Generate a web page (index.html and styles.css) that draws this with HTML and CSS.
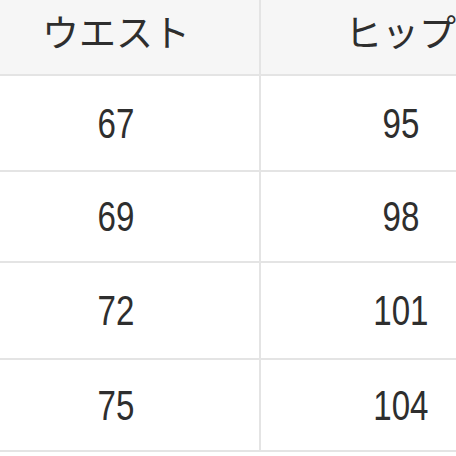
FILE: index.html
```html
<!DOCTYPE html>
<html lang="ja">
<head>
<meta charset="utf-8">
<link rel="stylesheet" href="styles.css">
</head>
<body>
<div class="table">
  <div class="cell head left">ウエスト</div>
  <div class="cell head right">ヒップ</div>
  <div class="cell left"><span class="num">67</span></div>
  <div class="cell right"><span class="num">95</span></div>
  <div class="cell left"><span class="num">69</span></div>
  <div class="cell right"><span class="num">98</span></div>
  <div class="cell left"><span class="num">72</span></div>
  <div class="cell right"><span class="num">101</span></div>
  <div class="cell left"><span class="num">75</span></div>
  <div class="cell right"><span class="num">104</span></div>
</div>
</body>
</html>
```

FILE: styles.css
```css
html, body {
  margin: 0;
  padding: 0;
  width: 456px;
  height: 456px;
  overflow: hidden;
  background: #ffffff;
}

.table {
  display: grid;
  grid-template-columns: 261px 195px;
  grid-template-rows: 76px 96px 91px 97px 92px;
  width: 456px;
  overflow: hidden;
}

.cell {
  box-sizing: border-box;
  display: flex;
  align-items: center;
  justify-content: center;
  border-bottom: 2px solid #e4e4e4;
  color: #2e2e2e;
  overflow: hidden;
  white-space: nowrap;
}

.left {
  border-right: 2px solid #e4e4e4;
  padding-right: 27px;
}

.right {
  padding-left: 84px;
}

.head {
  background: #f6f6f6;
  font-family: "Noto Sans CJK JP", "Noto Sans", sans-serif;
  font-size: 37px;
  line-height: 1;
  padding-bottom: 12px;
}

.head.right {
  justify-content: flex-start;
  padding-left: 84px;
}

.num {
  display: inline-block;
  font-family: "Liberation Sans", sans-serif;
  font-size: 43px;
  line-height: 1;
  transform: scaleX(0.77);
}
```
